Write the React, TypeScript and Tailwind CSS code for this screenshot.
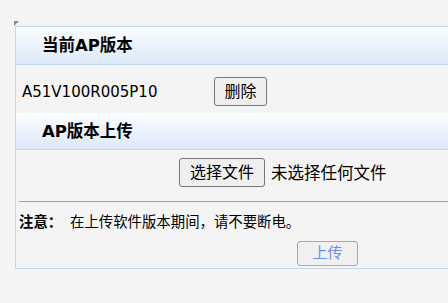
const font = { fontFamily: '"DejaVu Sans", "Noto Sans CJK SC", sans-serif' };

const Header = ({ title, className }: { title: string; className: string }) => (
    <div className={`flex items-center pl-[26px] bg-gradient-to-b from-[#fbfdff] to-[#dce8f9] border-b border-[#c4d8ef] ${className}`}>
        <span className="text-[16.5px] font-bold text-black">{title}</span>
    </div>
);

const App = () => {
    return (
        <div className="w-[448px] h-[303px] overflow-hidden bg-[#f5f5f5] text-black" style={font}>
            <div className="pt-[21px] pl-[14px]">
                <svg width="5" height="5" className="block">
                    <polygon points="0,0 5,0 0,5" fill="#8a8a8a" />
                </svg>

                <div className="ml-[1px] w-[470px] border border-[#c4d8ef] bg-[#f4f4f4]">
                    <Header title="当前AP版本" className="h-[38px] pt-[1px]" />

                    <div className="h-[48px] flex items-center pt-[5px] pl-[6px]">
                        <span className="w-[192px] text-[15px] mt-[2px]">A51V100R005P10</span>
                        <button className="w-[53px] h-[29px] text-[16px] bg-[#efefef] border border-[#767676] rounded-[3px] leading-none">
                            删除
                        </button>
                    </div>

                    <Header title="AP版本上传" className="h-[37px] pt-[3px]" />

                    <div className="h-[51px] flex items-start pt-[8px] pl-[163px]">
                        <button className="h-[29px] px-[10px] text-[16px] bg-[#efefef] border border-[#767676] rounded-[3px] leading-none">
                            选择文件
                        </button>
                        <span className="ml-[6px] mt-[4px] text-[16.5px]">未选择任何文件</span>
                    </div>

                    <div className="mx-[3px] h-[1px] bg-[#a3a3a3]" />

                    <div className="pl-[3px] pt-[10px] flex items-center text-[14.4px] leading-[20px]">
                        <span className="font-bold w-[51px]">注意：</span>
                        <span>在上传软件版本期间，请不要断电。</span>
                    </div>

                    <div className="pt-[9px] pb-[2px] pl-[281px]">
                        <button className="w-[61px] h-[25px] text-[15px] text-[#6d8cf2] bg-[#f0f0f0] border border-[#a8a8a8] rounded-[3px] leading-none">
                            上传
                        </button>
                    </div>
                </div>
            </div>
        </div>
    );
};

export default App;
